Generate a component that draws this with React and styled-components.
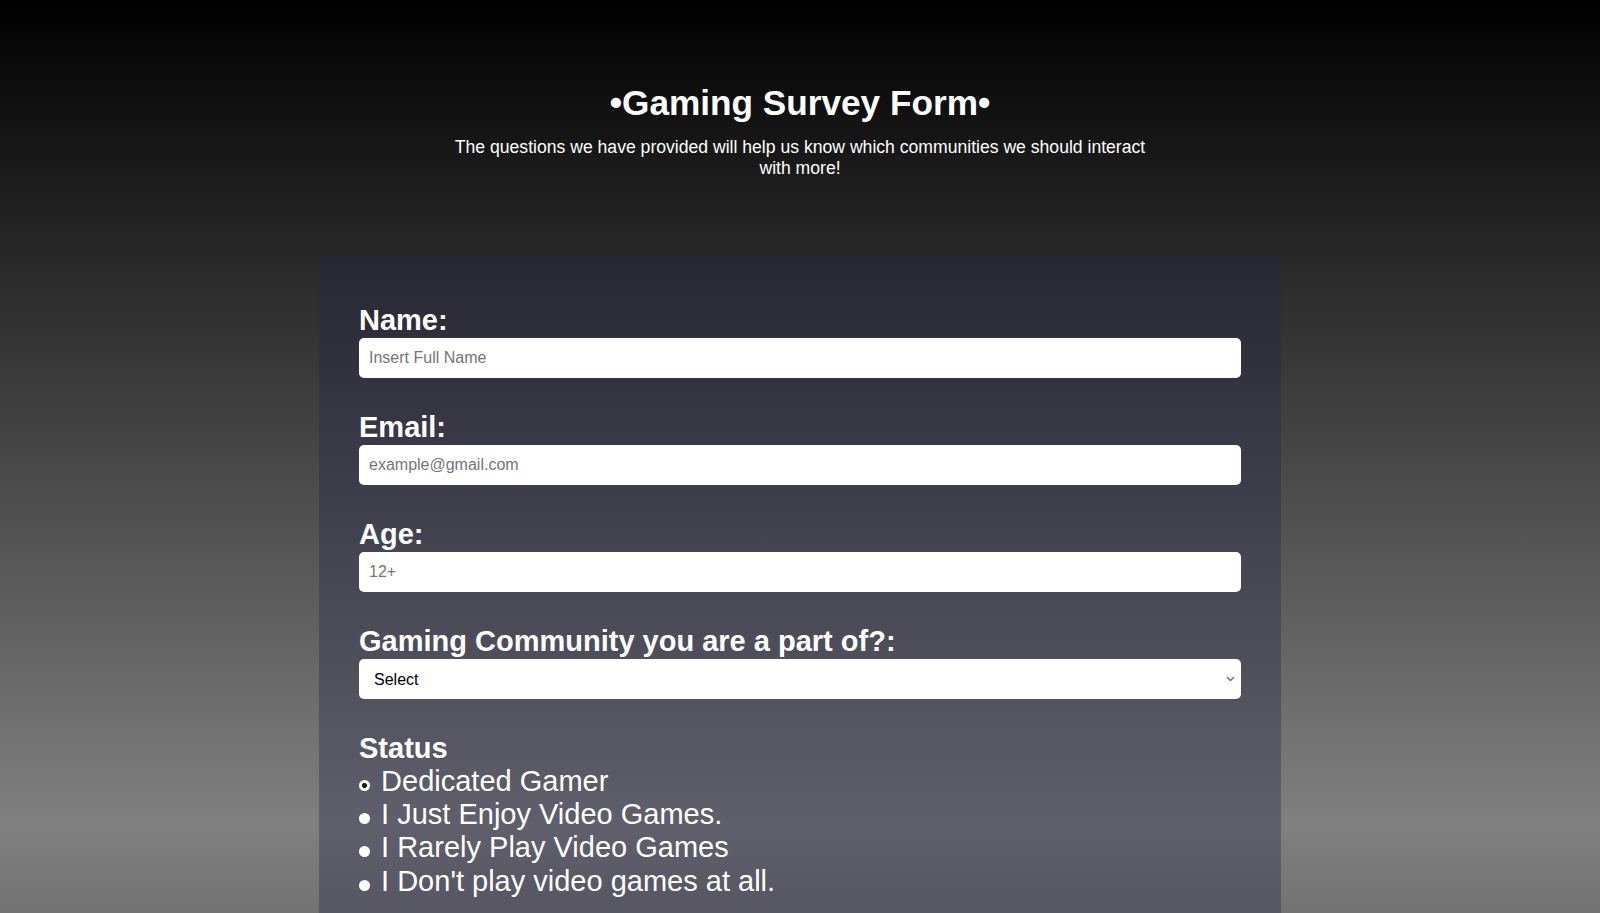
import React from 'react'
import styled, { createGlobalStyle } from 'styled-components'

const GlobalStyle = createGlobalStyle`
  html {
    min-height: 100%;
    background: linear-gradient(to bottom, #000 0px, #808080 825px, #000 1650px);
    background-repeat: no-repeat;
    background-color: #000;
  }
  body {
    margin: 0;
    font-family: "Liberation Sans", Arial, sans-serif;
    color: #fff;
  }
`;

const Header = styled.header`
  padding-top: 83px;
  text-align: center;
`;

const Title = styled.h1`
  margin: 0;
  font-size: 35.2px;
  font-weight: 700;
  line-height: normal;
`;

const Description = styled.p`
  max-width: 710px;
  margin: 14px auto 0;
  font-size: 17.6px;
  line-height: normal;
`;

const Card = styled.form`
  width: 962px;
  box-sizing: border-box;
  margin: 76px auto 0;
  padding: 49px 40px 40px;
  border-radius: 3px;
  background: rgba(38, 38, 74, 0.36);
`;

const Field = styled.div`
  margin-bottom: 33px;
`;

const Label = styled.label`
  display: block;
  font-size: 29px;
  font-weight: 700;
  line-height: 33px;
  margin-bottom: 1px;
`;

const TextInput = styled.input`
  display: block;
  width: 100%;
  height: 40px;
  box-sizing: border-box;
  border: none;
  border-radius: 5px;
  padding: 0 10px;
  font-family: "Liberation Sans", Arial, sans-serif;
  font-size: 16px;
  color: #000;
  background: #fff;
  outline: none;

  &::placeholder {
    color: #757575;
  }
`;

const SelectWrap = styled.div`
  position: relative;
`;

const Select = styled.select`
  appearance: none;
  display: block;
  width: 100%;
  height: 40px;
  box-sizing: border-box;
  border: none;
  border-radius: 5px;
  padding: 0 30px 0 15px;
  font-family: "Liberation Sans", Arial, sans-serif;
  font-size: 16px;
  color: #000;
  background: #fff;
  outline: none;
`;

const Chevron = styled.svg`
  position: absolute;
  right: 6px;
  top: 16px;
  width: 9px;
  height: 7px;
  pointer-events: none;
`;

const GroupTitle = styled.div`
  font-size: 29px;
  font-weight: 700;
  line-height: 33px;
`;

const Option = styled.label`
  display: block;
  font-size: 29px;
  line-height: 33.2px;
`;

const Radio = styled.input`
  appearance: none;
  display: inline-block;
  width: 11px;
  height: 11px;
  margin: 0 3px 0 0;
  border-radius: 50%;
  background: #fff;
  vertical-align: baseline;

  &:checked {
    background: radial-gradient(circle, #1a1a1a 0 2.2px, #fff 2.8px);
  }
`;

const statuses = [
  'Dedicated Gamer',
  'I Just Enjoy Video Games.',
  'I Rarely Play Video Games',
  "I Don't play video games at all.",
];

function App() {
  return (
    <>
      <GlobalStyle />
      <Header>
        <Title>•Gaming Survey Form•</Title>
        <Description>
          The questions we have provided will help us know which communities we should interact with more!
        </Description>
      </Header>
      <Card onSubmit={e => e.preventDefault()}>
        <Field>
          <Label htmlFor="name">Name:</Label>
          <TextInput id="name" type="text" placeholder="Insert Full Name" />
        </Field>
        <Field>
          <Label htmlFor="email">Email:</Label>
          <TextInput id="email" type="email" placeholder="example@gmail.com" />
        </Field>
        <Field>
          <Label htmlFor="age">Age:</Label>
          <TextInput id="age" type="number" placeholder="12+" />
        </Field>
        <Field>
          <Label htmlFor="community">Gaming Community you are a part of?:</Label>
          <SelectWrap>
            <Select id="community" defaultValue="">
              <option value="">Select</option>
              <option value="pc">PC</option>
              <option value="console">Console</option>
              <option value="mobile">Mobile</option>
            </Select>
            <Chevron viewBox="0 0 9 7">
              <path d="M1 2 L4.5 5.5 L8 2" fill="none" stroke="#6b6b6b" strokeWidth="1.3" />
            </Chevron>
          </SelectWrap>
        </Field>
        <GroupTitle>Status</GroupTitle>
        {statuses.map((s, i) => (
          <Option key={s}>
            <Radio type="radio" name="status" defaultChecked={i === 0} /> {s}
          </Option>
        ))}
      </Card>
    </>
  )
}

export default App
